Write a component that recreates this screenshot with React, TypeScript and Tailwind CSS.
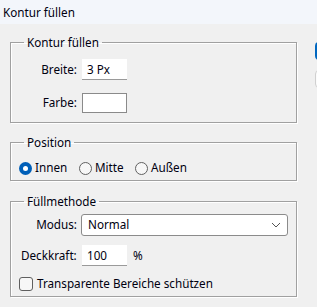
import type { ReactNode } from 'react'

function Group({ title, children, className }: { title: string; children: ReactNode; className?: string }) {
    return (
        <fieldset className={`border border-[#a0a0a0] shadow-[1px_1px_0_#ffffff,inset_1px_1px_0_#ffffff] ${className ?? ''}`}>
            <legend className="ml-[13px] px-[3px] leading-[16px]">{title}</legend>
            {children}
        </fieldset>
    )
}

function Radio({ checked, label }: { checked?: boolean; label: string }) {
    return (
        <div className="flex items-center gap-[3px]">
            {checked ? (
                <span className="flex h-[13px] w-[13px] items-center justify-center rounded-full bg-[#005fb8]">
                    <span className="h-[5px] w-[5px] rounded-full bg-white" />
                </span>
            ) : (
                <span className="h-[13px] w-[13px] rounded-full border border-[#616161] bg-[#f7f7f7]" />
            )}
            <span>{label}</span>
        </div>
    )
}

function TextBox({ value }: { value?: string }) {
    return (
        <div className="h-[21px] w-[45px] bg-white border-b border-[#9a9a9a] pl-[5px] leading-[21px]">
            {value}
        </div>
    )
}

export default function App() {
    return (
        <div
            className="h-[307px] w-[317px] overflow-hidden bg-[#f0f0f0] text-[11.7px] text-[#000010]"
            style={{ fontFamily: '"Noto Sans", "DejaVu Sans", sans-serif' }}
        >
            <div className="h-[24px] bg-[#f3f6fb] pl-[3px] leading-[24px]">Kontur füllen</div>

            <div className="flex pl-[10px] pt-[10px]">
                <div className="flex w-[287px] shrink-0 flex-col">
                    <Group title="Kontur füllen" className="pb-[9px]">
                        <div className="mt-[9px] flex items-center gap-[5px]">
                            <span className="w-[66px] text-right">Breite:</span>
                            <TextBox value="3 Px" />
                        </div>
                        <div className="mt-[13px] flex items-center gap-[5px]">
                            <span className="w-[66px] text-right">Farbe:</span>
                            <div className="h-[20px] w-[45px] border border-[#8a8a8a] bg-white" />
                        </div>
                    </Group>

                    <Group title="Position" className="mt-[11px] pb-[4px]">
                        <div className="mt-[10px] flex h-[16px] items-center pl-[8px]">
                            <div className="w-[60px]">
                                <Radio checked label="Innen" />
                            </div>
                            <div className="w-[56px]">
                                <Radio label="Mitte" />
                            </div>
                            <Radio label="Außen" />
                        </div>
                    </Group>

                    <Group title="Füllmethode" className="mt-[12px] pb-[4px]">
                        <div className="mt-[5px] flex items-center gap-[4px] pr-[8px]">
                            <span className="w-[66px] text-right">Modus:</span>
                            <div className="flex h-[22px] flex-1 items-center justify-between rounded-[3px] border border-[#8b8b8b] bg-white pl-[6px] pr-[6px]">
                                <span>Normal</span>
                                <svg width="10" height="6" viewBox="0 0 10 6" fill="none">
                                    <path d="M1 1l4 4 4-4" stroke="#555" strokeWidth="1" />
                                </svg>
                            </div>
                        </div>
                        <div className="mt-[9px] flex items-center pl-[10px]">
                            <span className="w-[61px]">Deckkraft:</span>
                            <TextBox value="100" />
                            <span className="ml-[6px]">%</span>
                        </div>
                        <div className="mt-[10px] flex h-[16px] items-center gap-[4px] pl-[8px]">
                            <span className="h-[14px] w-[14px] rounded-[3px] border border-[#5f5f5f] bg-[#f7f7f7]" />
                            <span>Transparente Bereiche schützen</span>
                        </div>
                    </Group>
                </div>

                <div className="ml-[18px] flex shrink-0 flex-col gap-[10px] pt-[8px]">
                    <div className="h-[18px] w-[70px] rounded-[4px] border-2 border-[#0067c0] bg-white" />
                    <div className="h-[18px] w-[70px] rounded-[4px] border border-[#d0d0d0] bg-[#fbfbfb]" />
                </div>
            </div>
        </div>
    )
}
